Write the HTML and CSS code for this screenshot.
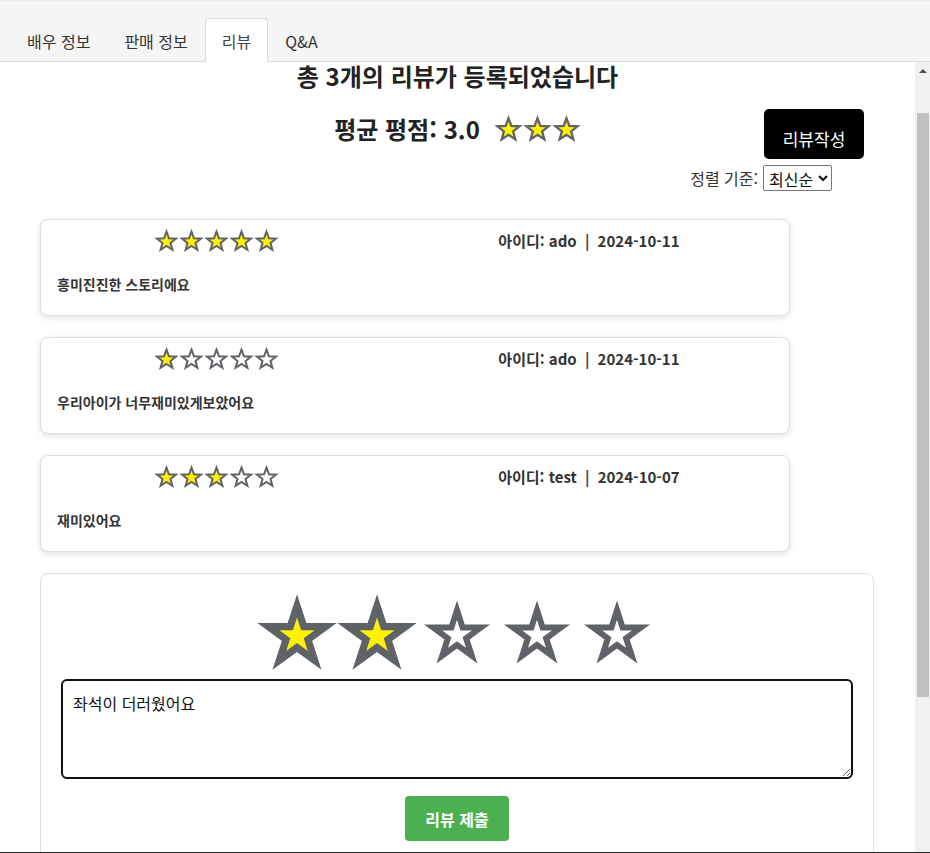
FILE: index.html
```html
<!DOCTYPE html>
<html lang="ko">
<head>
<meta charset="utf-8">
<title>리뷰</title>
<link rel="stylesheet" href="styles.css">
</head>
<body>
<svg class="defs" aria-hidden="true">
  <symbol id="star-s" viewBox="-50 -54.9 100 100">
    <polygon points="0,-40 9.87,-13.59 38.04,-12.36 15.98,5.19 23.51,32.36 0,16.8 -23.51,32.36 -15.98,5.19 -38.04,-12.36 -9.87,-13.59" stroke="#5f6368" stroke-width="8" stroke-linejoin="miter"/>
  </symbol>
  <symbol id="star-l" viewBox="-50 -54.15 100 100">
    <polygon points="0,-31.3 7.03,-9.68 29.77,-9.67 11.37,3.7 18.4,25.32 0,11.96 -18.4,25.32 -11.37,3.7 -29.77,-9.67 -7.03,-9.68" stroke="#5f6368" stroke-width="7.5" stroke-linejoin="miter"/>
  </symbol>
</svg>

<nav class="tabs">
  <div class="tab">배우 정보</div>
  <div class="tab">판매 정보</div>
  <div class="tab active">리뷰</div>
  <div class="tab">Q&amp;A</div>
</nav>

<main class="panel">
  <div class="content">
    <h2 class="title">총 3개의 리뷰가 등록되었습니다</h2>

    <div class="summary">
      <div class="avg">
        <span>평균 평점: 3.0</span>
        <span class="stars avg-stars">
          <svg class="star-m on"><use href="#star-s"/></svg><svg class="star-m on"><use href="#star-s"/></svg><svg class="star-m on"><use href="#star-s"/></svg>
        </span>
      </div>
      <button class="write-btn">리뷰작성</button>
    </div>

    <div class="sort">
      <label for="sort">정렬 기준:</label>
      <select id="sort" class="sort-select">
        <option>최신순</option>
        <option>평점순</option>
      </select>
    </div>

    <section class="review-list">
      <article class="review">
        <div class="review-head">
          <span class="stars"><svg class="star-s on"><use href="#star-s"/></svg><svg class="star-s on"><use href="#star-s"/></svg><svg class="star-s on"><use href="#star-s"/></svg><svg class="star-s on"><use href="#star-s"/></svg><svg class="star-s on"><use href="#star-s"/></svg></span>
          <span class="meta">아이디: ado <span class="sep">|</span> 2024-10-11</span>
        </div>
        <p class="review-text">흥미진진한 스토리에요</p>
      </article>

      <article class="review">
        <div class="review-head">
          <span class="stars"><svg class="star-s on"><use href="#star-s"/></svg><svg class="star-s off"><use href="#star-s"/></svg><svg class="star-s off"><use href="#star-s"/></svg><svg class="star-s off"><use href="#star-s"/></svg><svg class="star-s off"><use href="#star-s"/></svg></span>
          <span class="meta">아이디: ado <span class="sep">|</span> 2024-10-11</span>
        </div>
        <p class="review-text">우리아이가 너무재미있게보았어요</p>
      </article>

      <article class="review">
        <div class="review-head">
          <span class="stars"><svg class="star-s on"><use href="#star-s"/></svg><svg class="star-s on"><use href="#star-s"/></svg><svg class="star-s on"><use href="#star-s"/></svg><svg class="star-s off"><use href="#star-s"/></svg><svg class="star-s off"><use href="#star-s"/></svg></span>
          <span class="meta">아이디: test <span class="sep">|</span> 2024-10-07</span>
        </div>
        <p class="review-text">재미있어요</p>
      </article>
    </section>

    <form class="review-form">
      <div class="rate">
        <svg class="star-l on picked"><use href="#star-l"/></svg><svg class="star-l on picked"><use href="#star-l"/></svg><svg class="star-l off"><use href="#star-l"/></svg><svg class="star-l off"><use href="#star-l"/></svg><svg class="star-l off"><use href="#star-l"/></svg>
      </div>
      <textarea class="review-input" id="reviewInput">좌석이 더러웠어요</textarea>
      <div class="submit-row">
        <button type="button" class="submit-btn">리뷰 제출</button>
      </div>
    </form>
  </div>

  <div class="scrollbar" aria-hidden="true">
    <div class="scroll-up"><span class="arrow-up"></span></div>
    <div class="scroll-thumb"></div>
  </div>
</main>
<script src="script.js"></script>
</body>
</html>
```
FILE: styles.css
```css
* { box-sizing: border-box; }

html, body {
  margin: 0;
  padding: 0;
}

body {
  background: #1f2b31;
  font-family: "Noto Sans CJK KR", "Noto Sans", sans-serif;
  color: #222;
  overflow: hidden;
  height: 853px;
}

.defs {
  position: absolute;
  width: 0;
  height: 0;
  overflow: hidden;
}

/* Tabs */
.tabs {
  display: flex;
  align-items: flex-end;
  height: 62px;
  padding: 0 0 0 10px;
  background: #f5f5f5;
  border-top: 1px solid #ececec;
  border-bottom: 1px solid #dcdcdc;
}

.tab {
  height: 44px;
  margin-bottom: -1px;
  padding: 0 16px;
  display: flex;
  align-items: center;
  font-size: 16px;
  color: #333;
  border: 1px solid transparent;
  border-bottom: none;
  border-radius: 4px 4px 0 0;
}

.tab.active {
  background: #fff;
  border-color: #dcdcdc;
  color: #444;
}

/* Panel */
.panel {
  display: flex;
  height: 790px;
  background: #fff;
}

.content {
  flex: 1;
  min-width: 0;
  padding-top: 2px;
  clip-path: inset(-20px 0 0 0);
}

.scrollbar {
  width: 15px;
  flex: none;
  display: flex;
  flex-direction: column;
  background: #f1f1f1;
}

.scroll-up {
  height: 17px;
  display: flex;
  justify-content: center;
  align-items: center;
  padding-left: 1px;
}

.arrow-up {
  width: 0;
  height: 0;
  border-left: 4px solid transparent;
  border-right: 4px solid transparent;
  border-bottom: 4px solid #505050;
}

.scroll-thumb {
  height: 584px;
  margin: 34px 1px 0 2px;
  background: #c1c1c1;
}

.title {
  margin: 0;
  text-align: center;
  font-size: 24px;
  line-height: 24px;
  font-weight: 700;
  color: #222;
}

.summary {
  display: grid;
  grid-template-columns: 1fr auto 1fr;
  align-items: start;
  margin-top: 21px;
}

.avg {
  grid-column: 2;
  display: flex;
  align-items: center;
  gap: 14px;
  margin-top: 4px;
  height: 30px;
  font-size: 24px;
  font-weight: 700;
  color: #222;
}

.stars {
  display: flex;
}

.star-m {
  width: 29px;
  height: 29px;
  display: block;
}

.star-s {
  width: 25px;
  height: 25px;
  display: block;
}

.on { fill: #fff200; }
.off { fill: #fff; }

.write-btn {
  grid-column: 3;
  justify-self: end;
  margin-right: 51px;
  width: 100px;
  height: 50px;
  border: none;
  border-radius: 5px;
  background: #000;
  color: #fff;
  font-family: inherit;
  font-size: 17px;
  padding: 8px 0 0;
}

.sort {
  display: flex;
  justify-content: flex-end;
  align-items: center;
  gap: 5px;
  margin-top: 6px;
  padding-right: 83px;
  height: 26px;
  font-size: 16px;
  color: #333;
}

.sort-select {
  font-family: inherit;
  font-size: 16px;
  height: 26px;
  padding: 0 1px;
  color: #111;
}

/* Reviews */
.review-list {
  margin-top: 28px;
  padding-left: 40px;
}

.review {
  width: 750px;
  margin-bottom: 21px;
  padding: 8px 16px 21px;
  background: #fff;
  border: 1px solid #dedede;
  border-radius: 8px;
  box-shadow: 0 2px 6px rgba(0, 0, 0, 0.12);
}

.review-head {
  display: flex;
  justify-content: space-around;
  align-items: center;
  height: 25px;
  margin: 0 -16px 21px -12px;
}

.meta {
  font-size: 15px;
  font-weight: 700;
  color: #333;
}

.sep {
  margin: 0 4px;
  color: #2c3e50;
}

.review-text {
  margin: 0;
  font-size: 14px;
  line-height: 20px;
  font-weight: 700;
  color: #333;
}

/* Form */
.review-form {
  margin: 0 41px 0 40px;
  padding: 18px 20px 20px;
  border: 1px solid #dedede;
  border-radius: 8px;
  background: #fff;
}

.rate {
  display: flex;
  justify-content: center;
}

.star-l {
  width: 80px;
  height: 80px;
  display: block;
}

.star-l.picked {
  transform: scale(1.2);
}

.review-input {
  display: block;
  width: 100%;
  height: 100px;
  margin-top: 7px;
  padding: 10px;
  border: 2px solid #111;
  border-radius: 6px;
  font-family: inherit;
  font-size: 16px;
  line-height: 24px;
  color: #111;
  resize: vertical;
  outline: none;
  caret-color: #000;
}

.submit-row {
  display: flex;
  justify-content: center;
  margin-top: 17px;
}

.submit-btn {
  padding: 0 20px;
  height: 45px;
  border: none;
  border-radius: 4px;
  background: #4caf50;
  color: #fff;
  font-family: inherit;
  font-size: 16px;
  font-weight: 700;
}
```
FILE: script.js
```js
var input = document.getElementById('reviewInput');
input.focus({ preventScroll: true });
input.setSelectionRange(input.value.length, input.value.length);
```
